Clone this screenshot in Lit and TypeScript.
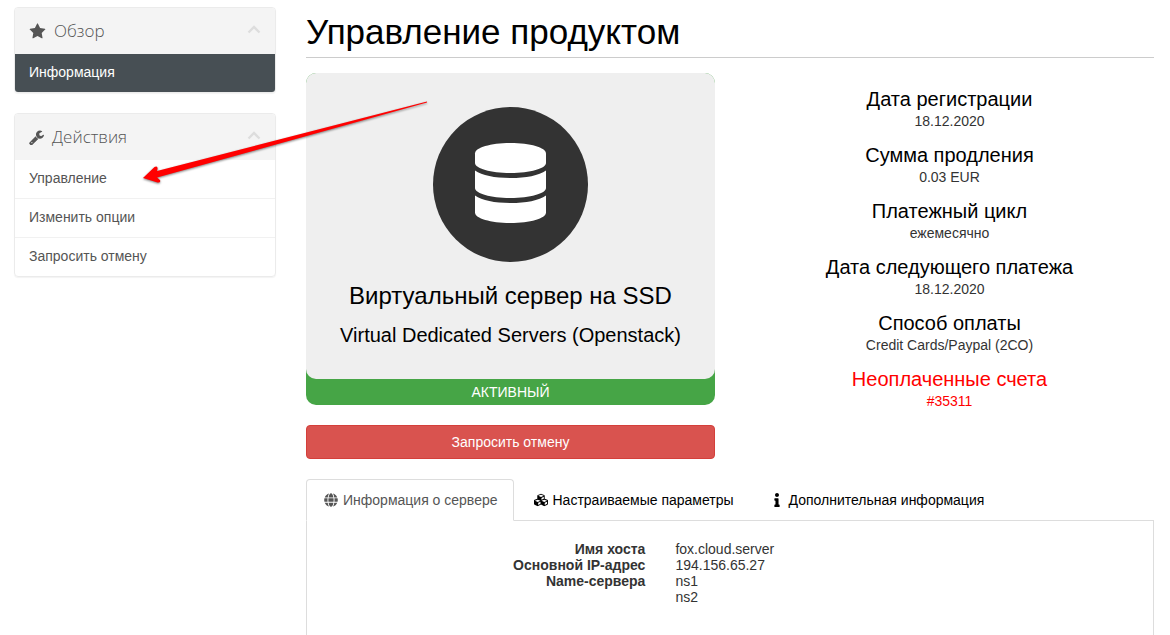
import { LitElement, html, css, svg } from "lit";
import { customElement, property, state } from "lit/decorators.js";
import { classMap } from "lit/directives/class-map.js";

const ICONS: Record<string, { box: string; d: string }> = {
  star: {
    box: "0 0 1792 1792",
    d: "M1728 647q0 22-26 48l-363 354 86 500q1 7 1 20 0 21-10.5 35.5t-30.5 14.5q-19 0-40-12l-449-236-449 236q-22 12-40 12-21 0-31.5-14.5t-10.5-35.5q0-6 2-20l86-500-364-354q-25-27-25-48 0-37 56-46l502-73 225-455q19-41 49-41t49 41l225 455 502 73q56 9 56 46z",
  },
  wrench: {
    box: "64 64 1664 1664",
    d: "M448 1472q0-26-19-45t-45-19-45 19-19 45 19 45 45 19 45-19 19-45zm644-420l-682 682q-37 37-90 37-52 0-91-37l-106-108q-38-36-38-90 0-53 38-91l681-681q39 98 114.5 173.5t173.5 114.5zm634-435q0 39-23 106-47 134-164.5 217.5t-258.5 83.5q-185 0-316.5-131.5t-131.5-316.5 131.5-316.5 316.5-131.5q58 0 121.5 16.5t107.5 46.5q16 11 16 28t-16 28l-293 169v224l193 107q5-3 79-48.5t135.5-81 70.5-35.5q15 0 23.5 10t8.5 25z",
  },
  globe: {
    box: "0 0 496 512",
    d: "M336.5 160C322 70.7 287.8 8 248 8s-74 62.7-88.5 152h177zM152 256c0 22.2 1.2 43.5 3.3 64h185.3c2.1-20.5 3.3-41.8 3.3-64s-1.2-43.5-3.3-64H155.3c-2.1 20.5-3.3 41.8-3.3 64zm324.7-96c-28.6-67.9-86.5-120.4-158-141.6 24.4 33.8 41.2 84.7 50 141.6h108zM177.2 18.4C105.8 39.6 47.8 92.1 19.3 160h108c8.7-56.9 25.5-107.8 49.9-141.6zM487.4 192H372.7c2.1 21 3.3 42.5 3.3 64s-1.2 43-3.3 64h114.6c5.5-20.5 8.6-41.8 8.6-64s-3.1-43.5-8.5-64zM120 256c0-21.5 1.2-43 3.3-64H8.6C3.2 212.5 0 233.8 0 256s3.2 43.5 8.6 64h114.6c-2-21-3.2-42.5-3.2-64zm39.5 96c14.5 89.3 48.7 152 88.5 152s74-62.7 88.5-152h-177zm159.3 141.6c71.4-21.2 129.4-73.7 158-141.6h-108c-8.8 56.9-25.6 107.8-50 141.6zM19.3 352c28.6 67.9 86.5 120.4 158 141.6-24.4-33.8-41.2-84.7-50-141.6h-108z",
  },
  cubes: {
    box: "0 0 512 512",
    d: "M488.6 250.2L392 214V105.5c0-15-9.3-28.4-23.4-33.7l-100-37.5c-8.1-3.1-17.1-3.1-25.3 0l-100 37.5c-14.1 5.3-23.4 18.7-23.4 33.7V214l-96.6 36.2C9.3 255.5 0 268.9 0 283.9V394c0 13.6 7.7 26.1 19.9 32.2l100 50c10.1 5.1 22.1 5.1 32.2 0l103.9-52 103.9 52c10.1 5.1 22.1 5.1 32.2 0l100-50c12.2-6.1 19.9-18.6 19.9-32.2V283.9c0-15-9.3-28.4-23.4-33.7zM358 214.8l-85 31.9v-68.2l85-37v73.3zM154 104.1l102-38.2 102 38.2v.6l-102 41.4-102-41.4v-.6zm84 291.1l-85 42.5v-79.1l85-38.8v75.4zm0-112l-102 41.4-102-41.4v-.6l102-38.2 102 38.2v.6zm240 112l-85 42.5v-79.1l85-38.8v75.4zm0-112l-102 41.4-102-41.4v-.6l102-38.2 102 38.2v.6z",
  },
  info: {
    box: "0 0 192 512",
    d: "M20 424.229h20V279.771H20c-11.046 0-20-8.954-20-20V212c0-11.046 8.954-20 20-20h112c11.046 0 20 8.954 20 20v212.229h20c11.046 0 20 8.954 20 20V492c0 11.046-8.954 20-20 20H20c-11.046 0-20-8.954-20-20v-47.771c0-11.046 8.954-20 20-20zM96 0C56.235 0 24 32.235 24 72s32.235 72 72 72 72-32.235 72-72S135.764 0 96 0z",
  },
};

const icon = (name: string) => {
  const { box, d } = ICONS[name];
  return html`<svg class="icon ${name}" viewBox=${box} aria-hidden="true">${svg`<path d=${d} />`}</svg>`;
};

@customElement("side-panel")
class SidePanel extends LitElement {
  @property() heading = "";
  @property() icon = "star";
  @property({ attribute: false }) items: string[] = [];
  @property({ attribute: false }) active = "";
  @state() private open = true;

  static styles = css`
    :host {
      display: block;
      border: 1px solid #ebebeb;
      border-radius: 4px;
      box-shadow: 0 1px 1px rgba(0, 0, 0, 0.05);
      overflow: hidden;
    }
    .title {
      margin: 0;
    }
    .toggle {
      display: flex;
      align-items: center;
      gap: 8px;
      width: 100%;
      height: 46px;
      padding: 0 14px;
      border: 0;
      background: #f4f4f4;
      color: #555;
      font: 300 17px/18px "Open Sans", sans-serif;
      text-align: left;
      cursor: pointer;
    }
    .label {
      flex: 1;
    }
    .icon {
      fill: currentColor;
    }
    .star {
      width: 17px;
      height: 17px;
    }
    .wrench {
      width: 15px;
      height: 15px;
    }
    .chevron {
      width: 14px;
      height: 10px;
      margin-bottom: 5px;
      fill: none;
      stroke: #ddd;
      stroke-width: 2.4;
    }
    .link {
      display: block;
      padding: 10px 14px 12px;
      border-top: 1px solid #f1f1f1;
      color: #555;
      font-size: 14px;
      line-height: 16px;
      text-decoration: none;
    }
    .link.first {
      border-top: 0;
    }
    .link.active {
      background: #474f54;
      color: #fff;
    }
  `;

  render() {
    return html`
      <h3 class="title">
        <button class="toggle" aria-expanded=${this.open} @click=${() => (this.open = !this.open)}>
          ${icon(this.icon)}
          <span class="label">${this.heading}</span>
          <svg class="chevron" viewBox="0 0 14 10" aria-hidden="true"><path d="M1.5 8.5 7 3l5.5 5.5" /></svg>
        </button>
      </h3>
      ${this.open
        ? html`<nav>
            ${this.items.map(
              (item, i) => html`<a
                href="#"
                class=${classMap({ link: true, first: i === 0, active: item === this.active })}
                >${item}</a
              >`
            )}
          </nav>`
        : null}
    `;
  }
}

const FACTS = [
  ["Дата регистрации", "18.12.2020"],
  ["Сумма продления", "0.03 EUR"],
  ["Платежный цикл", "ежемесячно"],
  ["Дата следующего платежа", "18.12.2020"],
  ["Способ оплаты", "Credit Cards/Paypal (2CO)"],
];

const TABS = [
  { icon: "globe", label: "Информация о сервере" },
  { icon: "cubes", label: "Настраиваемые параметры" },
  { icon: "info", label: "Дополнительная информация" },
];

const SERVER: [string, string[]][] = [
  ["Имя хоста", ["fox.cloud.server"]],
  ["Основной IP-адрес", ["194.156.65.27"]],
  ["Name-сервера", ["ns1", "ns2"]],
];

@customElement("app-root")
class AppRoot extends LitElement {
  @state() private tab = 0;

  static styles = css`
    :host {
      display: block;
      position: relative;
      color: #333;
      background: #fff;
      font: 14px/16px "Liberation Sans", Arial, sans-serif;
    }
    * {
      box-sizing: border-box;
    }
    .page {
      display: flex;
      gap: 30px;
      min-height: 100vh;
      padding: 7px 16px 0 14px;
    }
    .sidebar {
      display: flex;
      flex: 0 0 262px;
      flex-direction: column;
      gap: 20px;
    }
    .main {
      display: flex;
      flex: 1;
      flex-direction: column;
      min-width: 0;
    }
    .page-title {
      margin: 0 0 15px;
      padding: 5px 0;
      border-bottom: 1px solid #ccc;
      color: #000;
      font-size: 35px;
      font-weight: 400;
      line-height: 40px;
    }
    .columns {
      display: grid;
      grid-template-columns: 1fr 1fr;
      gap: 30px;
      margin-bottom: 20px;
    }
    .status {
      margin-bottom: 20px;
      border-radius: 10px;
      background: #46a546;
      color: #fff;
      line-height: 26px;
      text-align: center;
      text-transform: uppercase;
    }
    .product {
      display: flex;
      flex-direction: column;
      align-items: center;
      padding: 34px 20px 33px;
      border-radius: 10px;
      background: #efefef;
      color: #000;
      text-transform: none;
    }
    .product-icon {
      width: 155px;
      height: 155px;
      margin-bottom: 20px;
    }
    .product-name {
      margin: 0 0 14px;
      font-size: 24px;
      font-weight: 400;
      line-height: 28px;
    }
    .product-group {
      margin: 0;
      font-size: 20px;
      font-weight: 400;
      line-height: 22px;
    }
    .cancel {
      display: block;
      width: 100%;
      height: 34px;
      border: 1px solid #d43f3a;
      border-radius: 4px;
      background: #d9534f;
      color: #fff;
      font: inherit;
      cursor: pointer;
    }
    .facts {
      margin: 0;
      padding-top: 15px;
      text-align: center;
    }
    .fact-name {
      color: #000;
      font-size: 20px;
      line-height: 22px;
    }
    .fact-value {
      margin: 0 0 12px;
      line-height: 22px;
    }
    .unpaid,
    .unpaid a {
      color: #f00;
      text-decoration: none;
    }
    .tabs {
      display: flex;
      gap: 2px;
      border-bottom: 1px solid #ddd;
    }
    .tab {
      display: flex;
      align-items: center;
      gap: 5px;
      height: 42px;
      margin-bottom: -1px;
      padding: 0 15px 0 17px;
      border: 1px solid transparent;
      border-radius: 4px 4px 0 0;
      background: none;
      color: #000;
      font: inherit;
      white-space: nowrap;
      cursor: pointer;
    }
    .tab.active {
      border-color: #ddd #ddd #fff;
      background: #fff;
      color: #555;
    }
    .icon {
      width: 14px;
      height: 14px;
      fill: currentColor;
    }
    .details {
      flex: 1;
      padding: 20px 0 30px;
      border: solid #ddd;
      border-width: 0 1px;
    }
    .list {
      margin: 0;
    }
    .row {
      display: grid;
      grid-template-columns: 40% 1fr;
      gap: 30px;
    }
    .key {
      font-weight: 700;
      text-align: right;
    }
    .value {
      margin: 0;
    }
    .line {
      display: block;
    }
    .pointer {
      position: absolute;
      top: 96px;
      left: 138px;
      width: 294px;
      height: 92px;
      filter: drop-shadow(0 1px 1px rgba(0, 0, 0, 0.5));
      pointer-events: none;
    }
  `;

  render() {
    return html`
      <div class="page">
        <aside class="sidebar">
          <side-panel heading="Обзор" icon="star" .items=${["Информация"]} .active=${"Информация"}></side-panel>
          <side-panel
            heading="Действия"
            icon="wrench"
            .items=${["Управление", "Изменить опции", "Запросить отмену"]}
          ></side-panel>
        </aside>
        <main class="main">
          <h1 class="page-title">Управление продуктом</h1>
          <div class="columns">
            <div>
              <div class="status">
                <div class="product">
                  <svg class="product-icon" viewBox="0 0 155 155" aria-hidden="true">
                    <circle cx="77.5" cy="77.5" r="77.5" fill="#333" />
                    <g fill="#fff">
                      <path d="M42 46.5C42 40.5 58 36 77.5 36S113 40.5 113 46.5v9.5c0 5.5-16 10-35.5 10S42 61.5 42 56z" />
                      <path d="M42 63.5c7 5 20 7.5 35.5 7.5s28.5-2.5 35.5-7.5V81c0 5.500-16 10-35.500 10S42 86.500 42 81z" />
                      <path d="M42 88.5c7 5 20 7.5 35.5 7.5s28.5-2.5 35.5-7.5v17c0 6-16 10.500-35.500 10.500S42 111.500 42 105.500z" />
                    </g>
                  </svg>
                  <h3 class="product-name">Виртуальный сервер на SSD</h3>
                  <h4 class="product-group">Virtual Dedicated Servers (Openstack)</h4>
                </div>
                Активный
              </div>
              <button class="cancel">Запросить отмену</button>
            </div>
            <dl class="facts">
              ${FACTS.map(
                ([name, value]) => html`
                  <dt class="fact-name">${name}</dt>
                  <dd class="fact-value">${value}</dd>
                `
              )}
              <dt class="fact-name unpaid">Неоплаченные счета</dt>
              <dd class="fact-value unpaid"><a href="#">#35311</a></dd>
            </dl>
          </div>
          <div class="tabs" role="tablist">
            ${TABS.map(
              (t, i) => html`<button
                role="tab"
                aria-selected=${i === this.tab}
                class=${classMap({ tab: true, active: i === this.tab })}
                @click=${() => (this.tab = i)}
              >
                ${icon(t.icon)}<span>${t.label}</span>
              </button>`
            )}
          </div>
          <section class="details" role="tabpanel">
            <dl class="list">
              ${SERVER.map(
                ([key, values]) => html`<div class="row">
                  <dt class="key">${key}</dt>
                  <dd class="value">${values.map((v) => html`<span class="line">${v}</span>`)}</dd>
                </div>`
              )}
            </dl>
          </section>
        </main>
      </div>
      <svg class="pointer" viewBox="0 0 294 92" aria-hidden="true">
        <path
          d="M289 5.5 19 75 19.500 73Q20 69.500 16.500 71L5 82 19.500 86.500Q23 87 22 84L19 81.500 289 6.500z"
          fill="#f00"
        />
      </svg>
    `;
  }
}
